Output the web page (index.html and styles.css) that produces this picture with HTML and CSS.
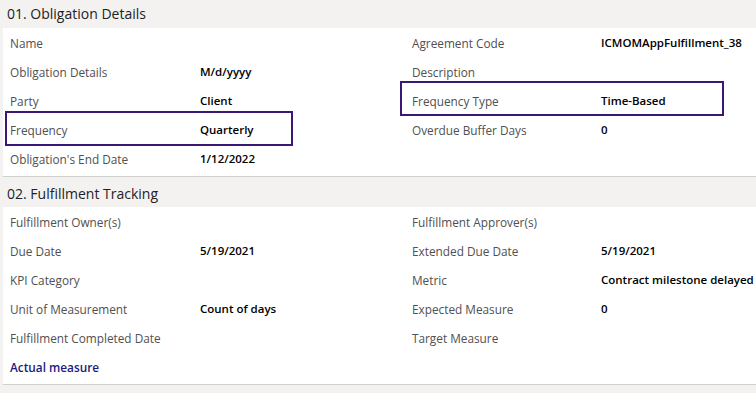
FILE: index.html
```html
<!DOCTYPE html>
<html lang="en">
  <head>
    <meta charset="UTF-8" />
    <title>Obligation</title>
    <link rel="stylesheet" href="styles.css">
  </head>
  <body>
    <section class="section">
      <h2 class="sectionTitle">01. Obligation Details</h2>
      <div class="card">
        <div class="fields">
          <span class="label">Name</span><span class="value"></span>
          <span class="label">Agreement Code</span><span class="value">ICMOMAppFulfillment_38</span>
          <span class="label">Obligation Details</span><span class="value">M/d/yyyy</span>
          <span class="label">Description</span><span class="value"></span>
          <span class="label">Party</span><span class="value">Client</span>
          <span class="label">Frequency Type</span><span class="value">Time-Based</span>
          <span class="label">Frequency</span><span class="value">Quarterly</span>
          <span class="label">Overdue Buffer Days</span><span class="value">0</span>
          <span class="label">Obligation's End Date</span><span class="value">1/12/2022</span>
          <span class="label"></span><span class="value"></span>
        </div>
        <!-- highlight boxes drawn over the form -->
        <div class="highlight freq"></div>
        <div class="highlight freqType"></div>
      </div>
    </section>
    <section class="section">
      <h2 class="sectionTitle second">02. Fulfillment Tracking</h2>
      <div class="card">
        <div class="fields">
          <span class="label">Fulfillment Owner(s)</span><span class="value"></span>
          <span class="label">Fulfillment Approver(s)</span><span class="value"></span>
          <span class="label">Due Date</span><span class="value">5/19/2021</span>
          <span class="label">Extended Due Date</span><span class="value">5/19/2021</span>
          <span class="label">KPI Category</span><span class="value"></span>
          <span class="label">Metric</span><span class="value">Contract milestone delayed</span>
          <span class="label">Unit of Measurement</span><span class="value">Count of days</span>
          <span class="label">Expected Measure</span><span class="value">0</span>
          <span class="label">Fulfillment Completed Date</span><span class="value"></span>
          <span class="label">Target Measure</span><span class="value"></span>
          <a class="link" href="#">Actual measure</a><span class="value"></span>
        </div>
      </div>
    </section>
  </body>
</html>
```

FILE: styles.css
```css
html {
  background: #f3f2f1;
}
body {
  margin: 0;
  font-family: "Open Sans", "Noto Sans", sans-serif;
  font-size: 12px;
  color: #333;
  overflow: hidden;
}
.sectionTitle {
  margin: 0;
  height: 29px;
  padding: 0 7px;
  font-size: 14px;
  font-weight: normal;
  line-height: 28px;
  color: #222;
}
.sectionTitle.second {
  height: 31px;
  line-height: 33px;
}
.card {
  position: relative;
  margin-left: 3px;
  padding: 0 0 3px 7px;
  background: #fff;
  border-bottom: 1px solid #d2d0ce;
}
.fields {
  display: grid;
  grid-template-columns: 190px 212px 189px 1fr;
  grid-auto-rows: 29px;
  align-items: center;
  margin-top: -1px;
  white-space: nowrap;
}
.label {
  font-size: 11.8px;
  color: #505050;
}
.value {
  font-size: 11.5px;
  color: #000;
  font-weight: 600;
}
.link {
  font-size: 11.8px;
  color: #1b1a80;
  font-weight: 600;
  text-decoration: none;
}
.highlight {
  position: absolute;
  border: 2px solid #3b1878;
}
.freq {
  left: 2px;
  top: 83px;
  width: 284px;
  height: 31px;
}
.freqType {
  left: 397px;
  top: 53px;
  width: 320px;
  height: 31px;
}
```
